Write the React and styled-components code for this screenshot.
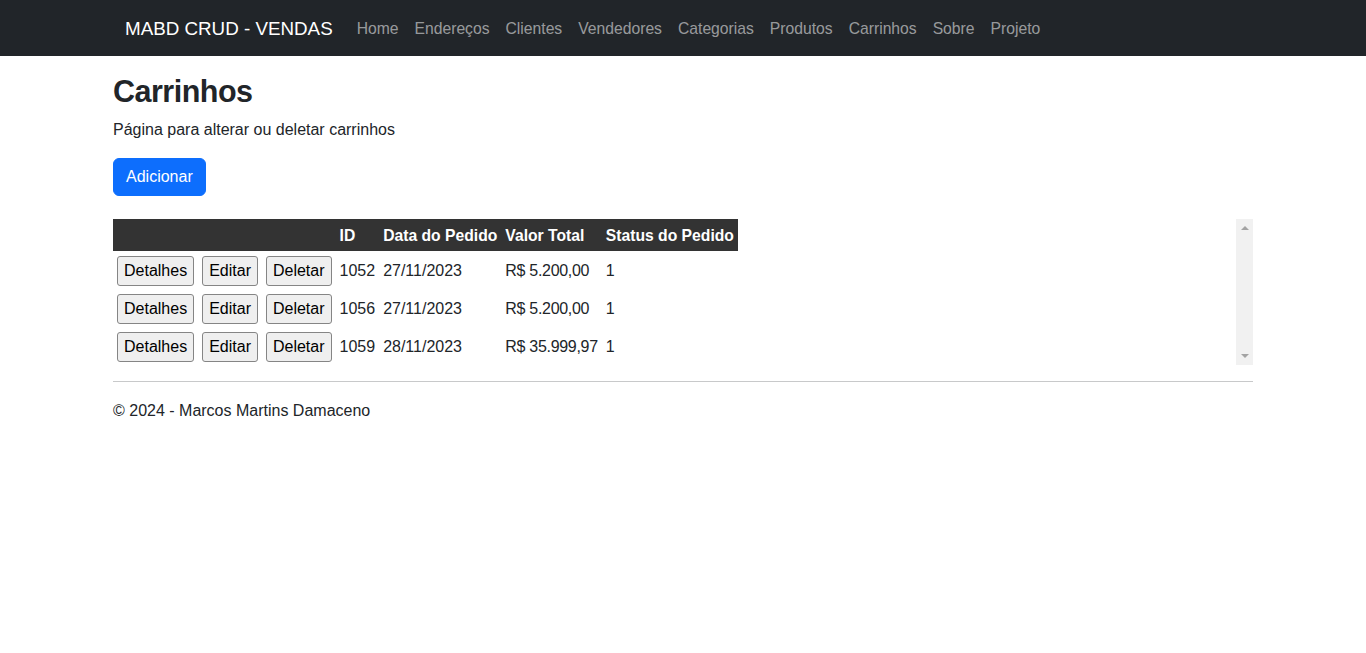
import React from 'react';
import styled, { createGlobalStyle } from 'styled-components';

const GlobalStyle = createGlobalStyle`
  * {
    box-sizing: border-box;
  }
  body {
    margin: 0;
    font-family: 'Liberation Sans', Arial, sans-serif;
    font-size: 16px;
    line-height: 24px;
    color: #212529;
    background: #fff;
  }
`;

const NavBar = styled.nav`
  background-color: #212529;
  height: 56px;
  margin-bottom: 16px;
`;

const NavContainer = styled.div`
  width: 1140px;
  margin: 0 auto;
  padding: 1px 12px 0;
  height: 100%;
  display: flex;
  align-items: center;
`;

const Brand = styled.a`
  color: #fff;
  font-size: 18.8px;
  line-height: 30px;
  margin-right: 16px;
  text-decoration: none;
`;

const NavList = styled.ul`
  display: flex;
  list-style: none;
  margin: 0;
  padding: 0;
`;

const NavLink = styled.a`
  display: block;
  padding: 8px;
  color: rgba(255, 255, 255, 0.55);
  text-decoration: none;
  font-size: 15.7px;
  line-height: 24px;
`;

const Main = styled.main`
  width: 1140px;
  margin: 0 auto;
`;

const Title = styled.h1`
  font-size: 30.5px;
  font-weight: 700;
  letter-spacing: -0.5px;
  line-height: 38px;
  margin: 0 0 8px;
  color: #212529;
`;

const Lead = styled.p`
  margin: 0 0 16px;
`;

const PrimaryButton = styled.button`
  font-family: inherit;
  font-size: 16px;
  line-height: 24px;
  padding: 6px 12px;
  border: 1px solid #0d6efd;
  border-radius: 6px;
  background-color: #0d6efd;
  color: #fff;
  margin-bottom: 23px;
  cursor: pointer;
`;

const ScrollBox = styled.div`
  display: flex;
  height: 146px;
`;

const TableArea = styled.div`
  flex: 1;
`;

const Table = styled.table`
  border-collapse: collapse;
`;

const HeadCell = styled.th`
  background-color: #333333;
  color: #fff;
  font-weight: 700;
  font-size: 15.7px;
  text-align: left;
  padding: 5px 4px 3px;
  line-height: 24px;
  white-space: nowrap;
`;

const Cell = styled.td`
  padding: 5px 4px 3px;
  line-height: 24px;
  white-space: nowrap;
  vertical-align: middle;
  letter-spacing: ${({ $tight }) => ($tight ? '-0.3px' : 'normal')};
`;

const RowButton = styled.button`
  font-family: inherit;
  font-size: 16px;
  line-height: 22px;
  padding: 3px 6px;
  color: #000;
  background-color: #efefef;
  border: 1px solid #858585;
  border-radius: 3px;
  display: block;
  cursor: pointer;
`;

const ScrollTrack = styled.div`
  width: 17px;
  background-color: #f1f1f1;
  display: flex;
  flex-direction: column;
  justify-content: space-between;
  align-items: center;
  padding: 7px 0 7px;
`;

const Arrow = styled.span`
  width: 0;
  height: 0;
  border-left: 4px solid transparent;
  border-right: 4px solid transparent;
  ${({ $down }) =>
    $down
      ? 'border-top: 4px solid #a3a3a3;'
      : 'border-bottom: 4px solid #a3a3a3;'}
`;

const Divider = styled.hr`
  border: 0;
  border-top: 1px solid #c8c9ca;
  margin: 16px 0 17px;
`;

const Footer = styled.footer`
  color: #212529;
`;

const links = [
  'Home',
  'Endereços',
  'Clientes',
  'Vendedores',
  'Categorias',
  'Produtos',
  'Carrinhos',
  'Sobre',
  'Projeto',
];

const carrinhos = [
  { id: 1052, data: '27/11/2023', valor: 'R$ 5.200,00', status: 1 },
  { id: 1056, data: '27/11/2023', valor: 'R$ 5.200,00', status: 1 },
  { id: 1059, data: '28/11/2023', valor: 'R$ 35.999,97', status: 1 },
];

export default function App() {
  return (
    <>
      <GlobalStyle />
      <NavBar>
        <NavContainer>
          <Brand href="#">MABD CRUD - VENDAS</Brand>
          <NavList>
            {links.map((link) => (
              <li key={link}>
                <NavLink href="#">{link}</NavLink>
              </li>
            ))}
          </NavList>
        </NavContainer>
      </NavBar>
      <Main>
        <Title>Carrinhos</Title>
        <Lead>Página para alterar ou deletar carrinhos</Lead>
        <PrimaryButton>Adicionar</PrimaryButton>
        <ScrollBox>
          <TableArea>
            <Table>
              <thead>
                <tr>
                  <HeadCell />
                  <HeadCell />
                  <HeadCell />
                  <HeadCell>ID</HeadCell>
                  <HeadCell>Data do Pedido</HeadCell>
                  <HeadCell>Valor Total</HeadCell>
                  <HeadCell>Status do Pedido</HeadCell>
                </tr>
              </thead>
              <tbody>
                {carrinhos.map((c) => (
                  <tr key={c.id}>
                    <Cell>
                      <RowButton>Detalhes</RowButton>
                    </Cell>
                    <Cell>
                      <RowButton>Editar</RowButton>
                    </Cell>
                    <Cell>
                      <RowButton>Deletar</RowButton>
                    </Cell>
                    <Cell>{c.id}</Cell>
                    <Cell>{c.data}</Cell>
                    <Cell $tight>{c.valor}</Cell>
                    <Cell>{c.status}</Cell>
                  </tr>
                ))}
              </tbody>
            </Table>
          </TableArea>
          <ScrollTrack>
            <Arrow />
            <Arrow $down />
          </ScrollTrack>
        </ScrollBox>
        <Divider />
        <Footer>© 2024 - Marcos Martins Damaceno</Footer>
      </Main>
    </>
  );
}
